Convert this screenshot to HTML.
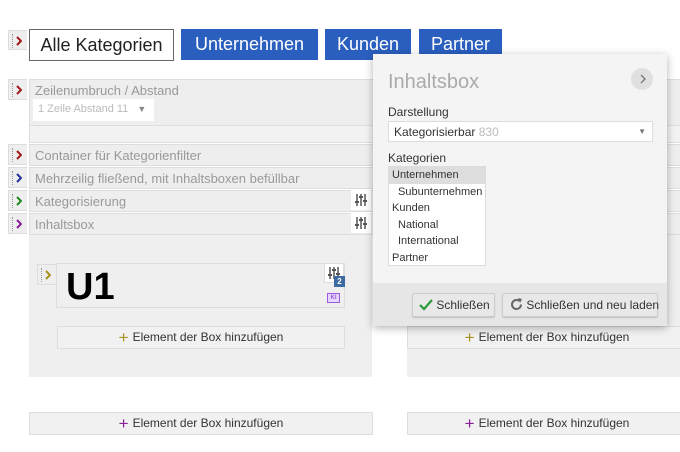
<!DOCTYPE html>
<html><head><meta charset="utf-8"><style>
*{box-sizing:border-box;margin:0;padding:0}
body{width:680px;height:452px;background:#fff;font-family:"Liberation Sans",sans-serif;position:relative;overflow:hidden}
.a{position:absolute}
.h{position:absolute;width:19px;height:21px;background:#eee;border:1px solid #ddd;border-right:none}
.h::before{content:"";position:absolute;left:3px;top:3px;height:14px;border-left:1px dotted #999}
.h svg{position:absolute;left:7px;top:5px}
.row{position:absolute;left:29px;width:660px;height:22px;background:#eee;border:1px solid #ddd;color:#999;font-size:13px;padding:3px 5px}
.tab{position:absolute;top:29px;height:31px;font-size:18px;line-height:31px;text-align:center;color:#fff;background:#2a5fc0}
.set{position:absolute;width:20px;height:20px;background:#fff}
.add{position:absolute;height:23px;background:#f1f1f1;border:1px solid #ddd;font-size:12px;color:#333;text-align:center;line-height:21px;white-space:nowrap}
.add b{font-size:17px;font-weight:normal;vertical-align:-2px;margin-right:4px}
.btn{position:absolute;top:293px;height:24px;background:#e8e8e8;border:1px solid #ccc;border-radius:2px;font-size:12px;color:#333;line-height:22px;box-shadow:0 1px 1px rgba(0,0,0,.15);white-space:nowrap}
</style></head><body>
<svg width="0" height="0" style="position:absolute"><defs>
<symbol id="ch" viewBox="0 0 6 10"><polyline points="1,1 5,5 1,9" fill="none" stroke="currentColor" stroke-width="2"/></symbol>
<symbol id="sl" viewBox="0 0 14 14"><g stroke="#555" stroke-width="1.5"><line x1="3" y1="1" x2="3" y2="13"/><line x1="7" y1="1" x2="7" y2="13"/><line x1="11" y1="1" x2="11" y2="13"/></g><g fill="#555"><rect x="1" y="8" width="4" height="2"/><rect x="5" y="3" width="4" height="2"/><rect x="9" y="7" width="4" height="2"/></g></symbol>
</defs></svg>
<div class="h" style="left:8px;top:30px;height:20px;color:#a01818"><svg width="6" height="10"><use href="#ch"/></svg></div>
<div class="a" style="left:29px;top:29px;width:145px;height:32px;border:1px solid #666;font-size:18px;line-height:30px;text-align:center;color:#222">Alle Kategorien</div>
<div class="tab" style="left:181px;width:137px">Unternehmen</div>
<div class="tab" style="left:325px;width:86px">Kunden</div>
<div class="tab" style="left:419px;width:83px">Partner</div>

<div class="h" style="left:8px;top:79px;color:#a01818"><svg width="6" height="10"><use href="#ch"/></svg></div>
<div class="row" style="top:79px;height:47px">Zeilenumbruch / Abstand</div>
<div class="a" style="left:33px;top:99px;width:121px;height:22px;background:#fff;font-size:11px;color:#bbb;padding:4px 5px">1 Zeile Abstand 11 <span style="color:#888;margin-left:6px;font-size:9px">▼</span></div>
<div class="a" style="left:29px;top:126px;width:660px;height:17px;background:#f2f2f2;border:1px solid #ddd;border-top:none"></div>

<div class="h" style="left:8px;top:144px;color:#a01818"><svg width="6" height="10"><use href="#ch"/></svg></div>
<div class="row" style="top:144px">Container für Kategorienfilter</div>
<div class="h" style="left:8px;top:167px;color:#22309a"><svg width="6" height="10"><use href="#ch"/></svg></div>
<div class="row" style="top:167px">Mehrzeilig fließend, mit Inhaltsboxen befüllbar</div>
<div class="h" style="left:8px;top:190px;color:#1f8a1f"><svg width="6" height="10"><use href="#ch"/></svg></div>
<div class="row" style="top:190px">Kategorisierung</div>
<div class="set" style="left:351px;top:190px"><svg width="14" height="14" style="margin:3px"><use href="#sl"/></svg></div>
<div class="h" style="left:8px;top:213px;color:#8a1f9a"><svg width="6" height="10"><use href="#ch"/></svg></div>
<div class="row" style="top:213px">Inhaltsbox</div>
<div class="set" style="left:351px;top:213px"><svg width="14" height="14" style="margin:3px"><use href="#sl"/></svg></div>

<div class="a" style="left:29px;top:235px;width:343px;height:142px;background:#efefef"></div>
<div class="a" style="left:407px;top:235px;width:273px;height:142px;background:#efefef"></div>
<div class="h" style="left:37px;top:264px;width:19px;color:#a8921a"><svg width="6" height="10"><use href="#ch"/></svg></div>
<div class="a" style="left:56px;top:263px;width:289px;height:45px;border:1px solid #ddd;background:#efefef;font-size:38px;font-weight:bold;padding:2px 9px;line-height:42px">U1</div>
<div class="a" style="left:324px;top:263px;width:20px;height:20px;background:#fff;border:1px solid #ddd"><svg width="14" height="14" style="margin:2px"><use href="#sl"/></svg></div>
<div class="a" style="left:334px;top:276px;width:11px;height:11px;background:#3d6aa0;color:#fff;font-size:8px;font-weight:bold;text-align:center;line-height:11px">2</div>
<div class="a" style="left:327px;top:293px;width:13px;height:10px;border:1px solid #9b5be0;background:#e8d8ff;color:#9b5be0;font-size:6px;font-weight:bold;text-align:center;line-height:8px">KI</div>
<div class="add" style="left:57px;top:326px;width:288px"><b style="color:#a8921a">+</b>Element der Box hinzufügen</div>
<div class="add" style="left:407px;top:326px;width:280px"><b style="color:#a8921a">+</b>Element der Box hinzufügen</div>
<div class="add" style="left:29px;top:412px;width:344px"><b style="color:#8a1f9a">+</b>Element der Box hinzufügen</div>
<div class="add" style="left:407px;top:412px;width:280px"><b style="color:#8a1f9a">+</b>Element der Box hinzufügen</div>

<div class="a" style="left:373px;top:54px;width:294px;height:272px;background:#f4f4f4;box-shadow:0 2px 8px rgba(0,0,0,.3)">
<div class="a" style="left:0;top:229px;width:294px;height:43px;background:#e6e6e6"></div>
<div class="a" style="left:15px;top:17px;font-size:20px;color:#aaa">Inhaltsbox</div>
<div class="a" style="left:258px;top:14px;width:22px;height:22px;border-radius:50%;background:#e0e0e0"><svg width="6" height="10" style="position:absolute;left:9px;top:6px;color:#666"><polyline points="1,1 5,5 1,9" fill="none" stroke="#666" stroke-width="1.2"/></svg></div>
<div class="a" style="left:15px;top:51px;font-size:12px;color:#333">Darstellung</div>
<div class="a" style="left:15px;top:67px;width:265px;height:21px;background:#fff;border:1px solid #ddd;font-size:12px;color:#333;padding:3px 5px">Kategorisierbar <span style="color:#bbb">830</span><span style="position:absolute;right:6px;top:5px;color:#777;font-size:8px">▼</span></div>
<div class="a" style="left:15px;top:97px;font-size:12px;color:#333">Kategorien</div>
<div class="a" style="left:15px;top:112px;width:98px;height:100px;background:#fff;border:1px solid #ddd;font-size:11px;color:#333;line-height:16.5px">
<div style="background:#ddd;padding-left:3px">Unternehmen</div>
<div style="padding-left:9px">Subunternehmen</div>
<div style="padding-left:3px">Kunden</div>
<div style="padding-left:9px">National</div>
<div style="padding-left:9px">International</div>
<div style="padding-left:3px">Partner</div></div>
</div>
<div class="btn" style="left:412px;width:83px;padding-left:6px"><svg width="14" height="12" style="vertical-align:-2px"><polyline points="1,6 5,10 13,1" fill="none" stroke="#2a9a3a" stroke-width="2.2"/></svg> Schließen</div>
<div class="btn" style="left:502px;width:156px;padding-left:7px"><svg width="13" height="13" style="vertical-align:-2px"><path d="M11 6.5A4.5 4.5 0 1 1 9.2 2.9" fill="none" stroke="#666" stroke-width="2"/><polygon points="8,0 12,1 10,5" fill="#666"/></svg> Schließen und neu laden</div>
</body></html>
